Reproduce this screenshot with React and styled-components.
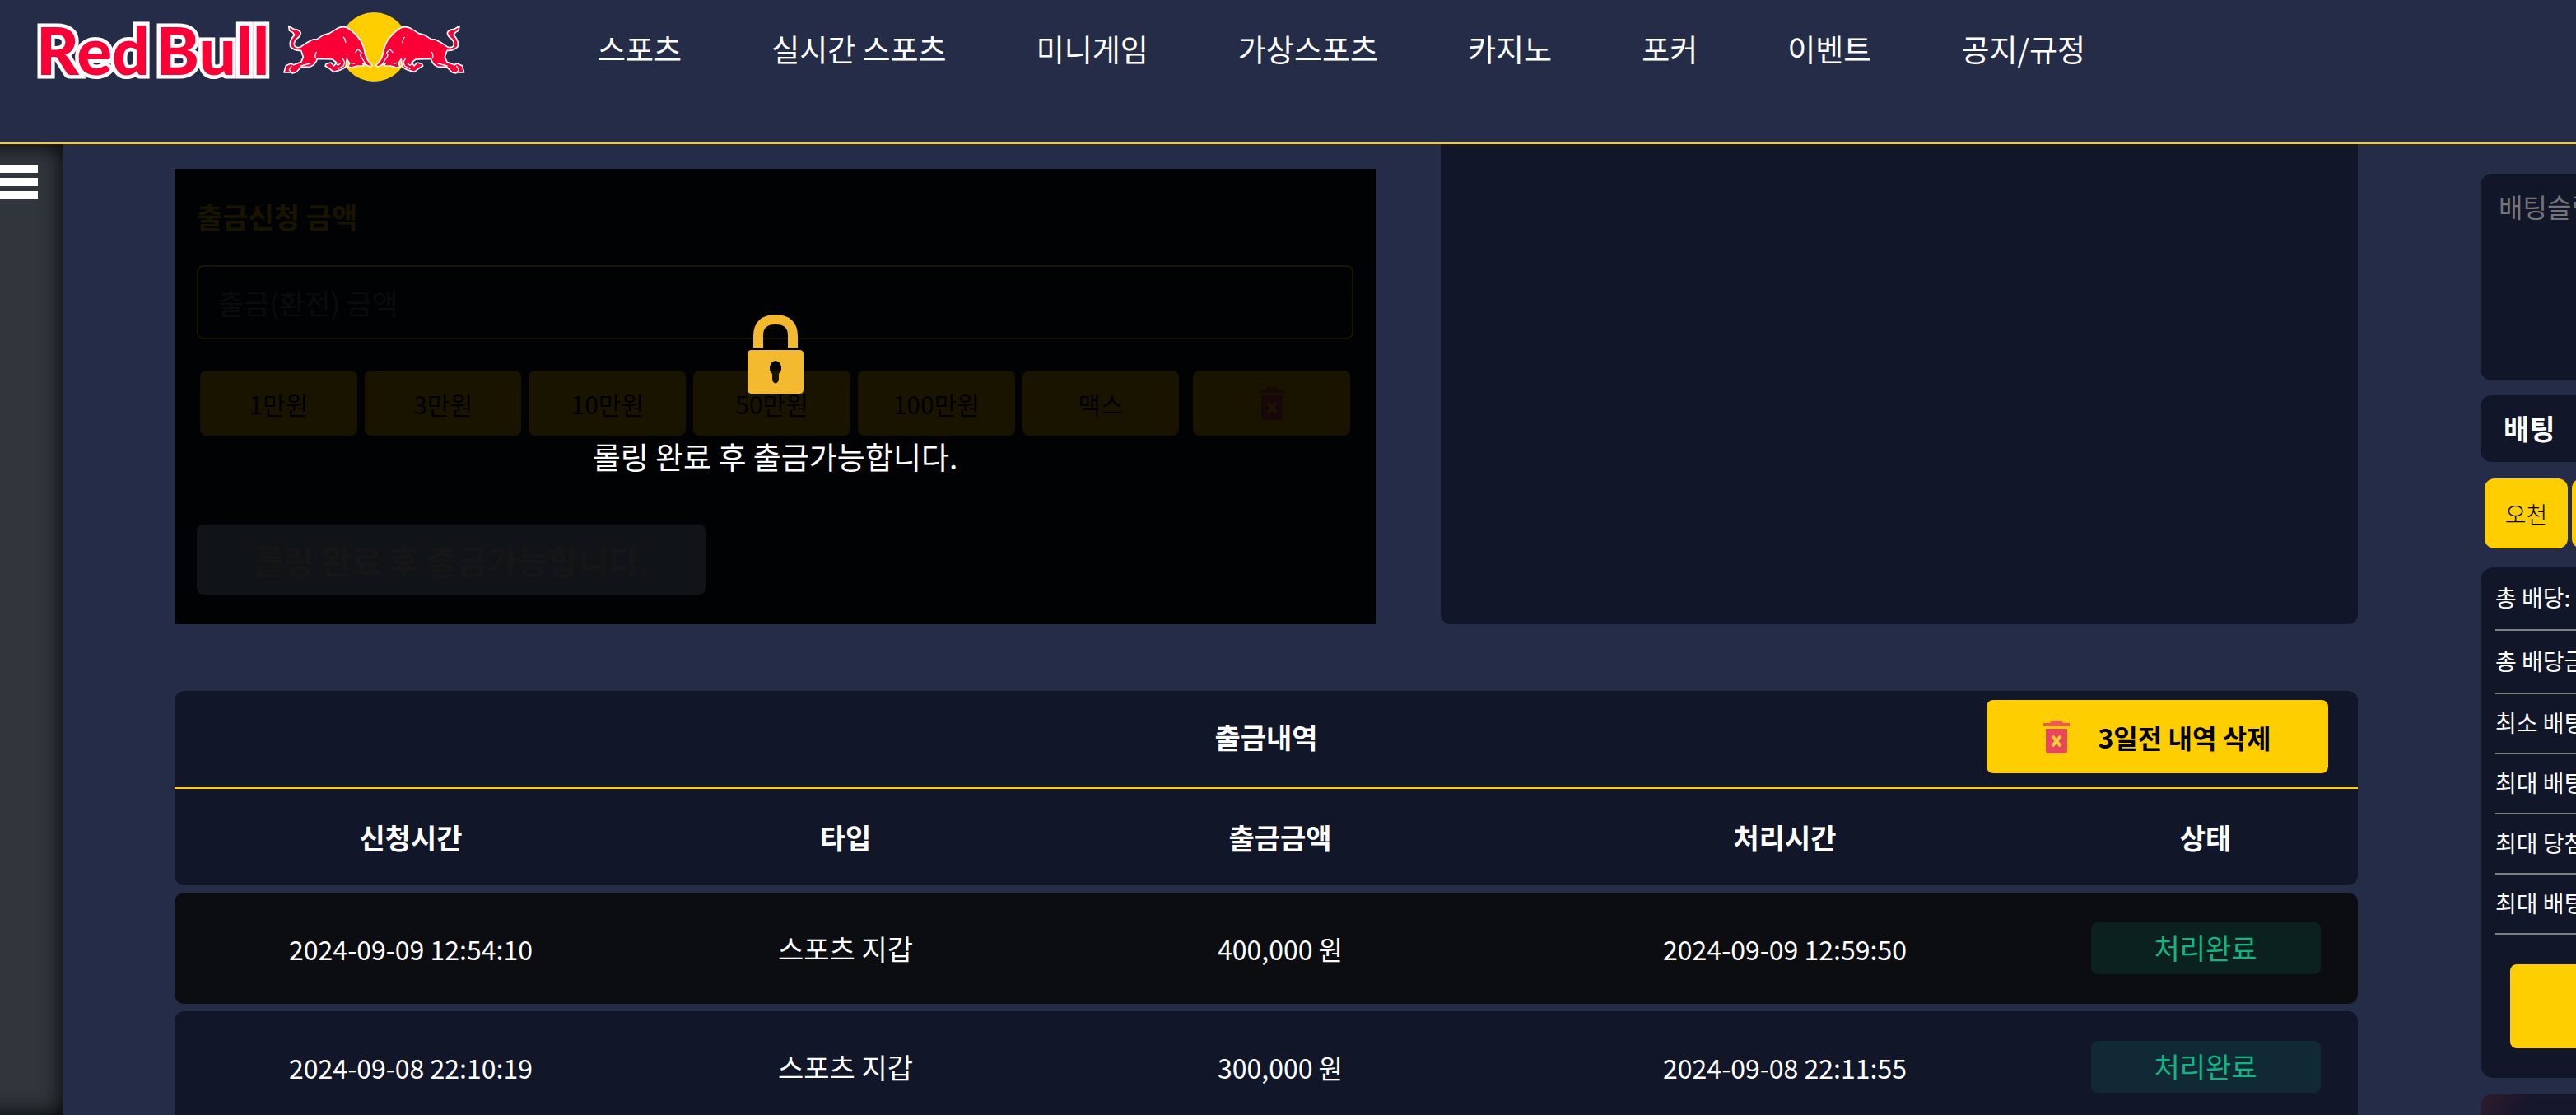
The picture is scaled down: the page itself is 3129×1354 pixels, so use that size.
import React from 'react';
import styled, {createGlobalStyle} from "styled-components";

const GlobalStyle = createGlobalStyle`
    * {
        box-sizing: border-box;
    }

    body {
        margin: 0;
        background: #252c48;
        color: #ffffff;
        font-family: "Noto Sans CJK KR", "Noto Sans", sans-serif;
        font-size: 34px;
        line-height: 50px;
    }

    button, input, textarea {
        font-family: inherit;
    }
`;

const Page = styled.div`
    display: flex;
    flex-direction: column;
    height: 100vh;
    overflow: hidden;
`;

const Header = styled.header`
    display: flex;
    flex: none;
    align-items: flex-start;
    gap: 146px;
    height: 175px;
    padding-left: 44px;
    border-bottom: 2px solid #ffce00;
`;

const Brand = styled.a`
    display: flex;
    align-items: flex-start;
    flex: none;
    width: 536px;
    text-decoration: none;
`;

const Nav = styled.nav`
    display: flex;
    gap: 109px;
    padding-top: 34px;
`;

const NavLink = styled.a`
    color: #ffffff;
    font-size: 37px;
    line-height: 50px;
    text-decoration: none;
    white-space: nowrap;
`;

const Body = styled.div`
    display: flex;
    flex: 1;
    min-height: 0;
`;

/* the rail starts outside the window so only its top and right edges are shaded */
const Rail = styled.aside`
    flex: none;
    width: 117px;
    margin-left: -40px;
    padding: 25px 0 0 40px;
    background: #30363c;
    box-shadow: inset 0 0 28px #000000;
`;

const MenuButton = styled.button`
    display: flex;
    flex-direction: column;
    gap: 6px;
    width: 46px;
    padding: 0;
    border: 0;
    background: none;
`;

const MenuBar = styled.span`
    width: 100%;
    height: 10px;
    background: #ffffff;
`;

const Main = styled.main`
    flex: 1;
    min-width: 0;
    padding: 0 149px 0 135px;
`;

const TopPanels = styled.div`
    display: grid;
    grid-template-columns: 1459fr 1114fr;
    gap: 79px;
`;

const WithdrawPanel = styled.section`
    position: relative;
    margin-top: 30px;
    padding: 33px 27px 36px;
    background: #111629;
`;

const FieldLabel = styled.label`
    display: block;
    color: #ffce00;
    font-weight: 700;
`;

const AmountInput = styled.input`
    display: block;
    width: 100%;
    height: 90px;
    margin-top: 34px;
    padding: 0 24px;
    border: 2px solid #ffce00;
    border-radius: 8px;
    background: transparent;
    color: #ffffff;
    font-size: 34px;

    &::placeholder {
        color: #757575;
        opacity: 1;
    }
`;

const AmountButtons = styled.div`
    display: flex;
    gap: 9px;
    margin-top: 38px;
    padding: 0 4px;
`;

const AmountButton = styled.button`
    display: flex;
    flex: 1;
    align-items: center;
    justify-content: center;
    height: 79px;
    margin-left: ${props => props.$apart ? "8px" : "0"};
    padding: 0;
    border: 0;
    border-radius: 8px;
    background: #ffce00;
    color: #000000;
    font-size: 30px;
`;

const SubmitButton = styled.button`
    width: 44%;
    height: 85px;
    margin-top: 108px;
    border: 0;
    border-radius: 8px;
    background: #a0c8f0;
    color: #dddddd;
    font-size: 40px;
    font-weight: 700;
    white-space: nowrap;
`;

const LockOverlay = styled.div`
    position: absolute;
    inset: 0;
    display: flex;
    flex-direction: column;
    align-items: center;
    justify-content: center;
    gap: 48px;
    background: rgba(0, 0, 0, 0.9);
    font-size: 37px;
    line-height: 56px;
`;

const InfoPanel = styled.section`
    border-radius: 0 0 12px 12px;
    background: #111629;
`;

const History = styled.section`
    margin-top: 81px;
`;

const HistoryBar = styled.div`
    display: grid;
    grid-template-columns: 1fr auto 1fr;
    align-items: center;
    padding: 11px 36px 17px;
    border-bottom: 2px solid #ffce00;
    border-radius: 12px 12px 0 0;
    background: #111629;
`;

const HistoryTitle = styled.h2`
    grid-column: 2;
    margin: 0;
    font-size: 34px;
    font-weight: 700;
`;

const DeleteButton = styled.button`
    display: flex;
    align-items: center;
    justify-content: center;
    justify-self: end;
    gap: 34px;
    width: 415px;
    height: 89px;
    border: 0;
    border-radius: 8px;
    background: #ffce00;
    color: #000000;
    font-size: 32px;
    font-weight: 700;
`;

const HistoryTable = styled.table`
    display: block;

    thead, tbody {
        display: block;
    }
`;

const HistoryRow = styled.tr`
    display: grid;
    grid-template-columns: 574fr 482fr 574fr 652fr 370fr;
    align-items: center;
    height: ${props => props.$head ? "117px" : "135px"};
    margin-bottom: 9px;
    border-radius: ${props => props.$head ? "0 0 12px 12px" : "12px"};
    background: ${props => props.$dark ? "#0b0d11" : "#111629"};
`;

const HeadCell = styled.th`
    padding: 0;
    font-weight: 700;
    text-align: center;
`;

const Cell = styled.td`
    padding: 0;
    font-size: ${props => props.$numeric ? "32px" : "34px"};
    text-align: center;
`;

const Status = styled.span`
    display: block;
    width: 279px;
    margin: 0 auto;
    padding: 6px 0 7px;
    border-radius: 8px;
    background: rgba(20, 180, 130, 0.12);
    color: #14b482;
`;

const SlipColumn = styled.aside`
    flex: none;
    width: 116px;
    overflow: hidden;
`;

const Slip = styled.div`
    width: 440px;
    padding-top: 36px;
`;

const SlipBox = styled.textarea`
    display: block;
    width: 100%;
    height: 251px;
    padding: 14px 22px;
    border: 0;
    border-radius: 14px;
    background: #111629;
    color: #ffffff;
    font-size: 32px;
    line-height: 50px;
    resize: none;

    &::placeholder {
        color: #757575;
        opacity: 1;
    }
`;

const SlipTitle = styled.h3`
    margin: 18px 0 0;
    padding: 15px 28px 16px;
    border-radius: 14px;
    background: #111629;
    font-size: 34px;
    line-height: 50px;
`;

const Chips = styled.div`
    display: flex;
    gap: 5px;
    margin: 20px 5px 0;
`;

const Chip = styled.button`
    width: 101px;
    height: 85px;
    padding: 0;
    border: 0;
    border-radius: 12px;
    background: #ffce00;
    color: #000000;
    font-size: 28px;
    font-weight: 300;
`;

const Summary = styled.section`
    margin-top: 23px;
    padding: 0 18px 36px;
    border-radius: 16px;
    background: #111629;
`;

const SummaryLine = styled.div`
    padding: ${props => props.$tall ? "16px 0 19px" : "14px 0 17px"};
    border-bottom: 2px solid #808080;
    font-size: 28px;
    line-height: 40px;
    white-space: nowrap;
`;

const BetButton = styled.button`
    display: block;
    width: 368px;
    height: 102px;
    margin: 36px 18px 0;
    border: 0;
    border-radius: 8px;
    background: #ffce00;
    color: #000000;
    font-size: 34px;
    font-weight: 700;
`;

const Promo = styled.section`
    height: 200px;
    margin-top: 20px;
    border-radius: 14px;
    background: linear-gradient(120deg, #301c2c 0, #15152b 60px);
`;

function Bull() {
    return (
        <g strokeLinejoin="round" strokeLinecap="round">
            <path
                d="M62 95 L80 106 Q102 107 106 120 Q104 133 90 142 Q78 156 84 168 Q92 177 107 170 Q124 156 150 144 L165 143 L188 128 L210 122 L240 103 Q262 92 282 105 Q308 124 324 148 Q336 168 341 198 Q346 220 367 238 L359 243 L332 231 L336 240 L312 240 L292 246 L277 243 L284 231 L274 215 L270 243 Q255 256 226 262 L208 248 L195 240 L199 232 L216 228 L227 240 L236 228 L221 216 L166 214 Q160 236 141 243 L108 244 L88 264 L75 267 L72 263 L45 264 L52 239 L70 231 L80 236 L107 226 L115 208 L107 184 Q83 186 68 170 Q62 150 83 127 Q77 116 65 112 Z"
                fill="#fa0037" stroke="#ffffff" strokeWidth="5"
            />
            <path
                d="M262 136 Q270 143 269 155 M305 191 L315 179 L327 192 L323 203 M325 206 L345 237 M163 190 Q156 199 160 212 M236 233 L242 238 L250 231 M72 241 L64 254 L70 262 M107 240 L140 231 M290 229 L301 231 M258 212 L266 226 L262 240 L242 250"
                fill="none" stroke="#ffffff" strokeWidth="4"
            />
        </g>
    );
}

function Wordmark({x, children}) {
    return (
        <text
            x={x} y="91" fontFamily="Lato, sans-serif" fontSize="80" fontWeight="900"
            fill="#fa0037" stroke="#ffffff" strokeWidth="9" paintOrder="stroke"
        >
            {children}
        </text>
    );
}

function Logo() {
    return (
        <Brand href="#" aria-label="Red Bull">
            <svg width="536" height="110" viewBox="44 0 536 110">
                <Wordmark x="44">Red</Wordmark>
                <Wordmark x="189">Bull</Wordmark>
                <svg x="330" y="0" width="250" height="110" viewBox="0 0 750 330">
                    <circle cx="373" cy="171" r="126" fill="#ffce00"/>
                    <Bull/>
                    <g transform="translate(746 0) scale(-1 1)">
                        <Bull/>
                    </g>
                </svg>
            </svg>
        </Brand>
    );
}

function TrashIcon() {
    return (
        <svg width="32" height="40" viewBox="0 0 32 40" aria-hidden="true">
            <path d="M10 0 H22 L24 3 H32 V7 H0 V3 H8 Z" fill="#ee5a50"/>
            <path d="M3 10 H29 V36 Q29 40 25 40 H7 Q3 40 3 36 Z" fill="#e8465a"/>
            <path d="M11 19 L21 31 M21 19 L11 31" stroke="#ffce3a" strokeWidth="4"/>
        </svg>
    );
}

function LockIcon() {
    return (
        <svg width="68" height="96" viewBox="0 0 68 96" aria-hidden="true">
            <path d="M13 40 V26 Q13 6 34 6 Q55 6 55 26 V40" fill="none" stroke="#f3b92f" strokeWidth="12"/>
            <path
                d="M5 43 H63 Q68 43 68 48 V91 Q68 96 63 96 H5 Q0 96 0 91 V48 Q0 43 5 43 Z M34 56 A8 9 0 0 0 30 72 V80 Q34 87 38 80 V72 A8 9 0 0 0 34 56 Z"
                fill="#f3b92f" fillRule="evenodd"
            />
        </svg>
    );
}

const menu = ["스포츠", "실시간 스포츠", "미니게임", "가상스포츠", "카지노", "포커", "이벤트", "공지/규정"];

const amounts = ["1만원", "3만원", "10만원", "50만원", "100만원", "맥스"];

const columns = ["신청시간", "타입", "출금금액", "처리시간", "상태"];

const withdrawals = [
    {requested: "2024-09-09 12:54:10", type: "스포츠 지갑", amount: "400,000 원", processed: "2024-09-09 12:59:50"},
    {requested: "2024-09-08 22:10:19", type: "스포츠 지갑", amount: "300,000 원", processed: "2024-09-08 22:11:55"},
];

const limits = ["총 배당:", "총 배당금:", "최소 배팅:", "최대 배팅:", "최대 당첨:", "최대 배팅:"];

export default class App extends React.Component {

    renderForm() {
        return (
            <WithdrawPanel>
                <FieldLabel htmlFor="amount">출금신청 금액</FieldLabel>
                <AmountInput id="amount" placeholder="출금(환전) 금액"/>
                <AmountButtons>
                    {amounts.map(amount => (
                        <AmountButton key={amount} type="button">{amount}</AmountButton>
                    ))}
                    <AmountButton $apart type="button" aria-label="삭제">
                        <TrashIcon/>
                    </AmountButton>
                </AmountButtons>
                <SubmitButton type="button">롤링 완료 후 출금가능합니다.</SubmitButton>
                <LockOverlay>
                    <LockIcon/>
                    <span>롤링 완료 후 출금가능합니다.</span>
                </LockOverlay>
            </WithdrawPanel>
        );
    }

    renderHistory() {
        return (
            <History>
                <HistoryBar>
                    <HistoryTitle>출금내역</HistoryTitle>
                    <DeleteButton type="button">
                        <TrashIcon/>
                        3일전 내역 삭제
                    </DeleteButton>
                </HistoryBar>
                <HistoryTable>
                    <thead>
                        <HistoryRow $head>
                            {columns.map(column => (
                                <HeadCell key={column}>{column}</HeadCell>
                            ))}
                        </HistoryRow>
                    </thead>
                    <tbody>
                        {withdrawals.map((item, index) => (
                            <HistoryRow key={item.requested} $dark={index % 2 === 0}>
                                <Cell $numeric>{item.requested}</Cell>
                                <Cell>{item.type}</Cell>
                                <Cell $numeric>{item.amount}</Cell>
                                <Cell $numeric>{item.processed}</Cell>
                                <Cell><Status>처리완료</Status></Cell>
                            </HistoryRow>
                        ))}
                    </tbody>
                </HistoryTable>
            </History>
        );
    }

    renderSlip() {
        return (
            <SlipColumn>
                <Slip>
                    <SlipBox aria-label="배팅슬립" placeholder="배팅슬립"/>
                    <SlipTitle>배팅</SlipTitle>
                    <Chips>
                        <Chip type="button">오천</Chip>
                        <Chip type="button">만원</Chip>
                    </Chips>
                    <Summary>
                        {limits.map((label, index) => (
                            <SummaryLine key={index} $tall={index < 2}>{label}</SummaryLine>
                        ))}
                        <BetButton type="button">배팅</BetButton>
                    </Summary>
                    <Promo/>
                </Slip>
            </SlipColumn>
        );
    }

    render() {
        return (
            <Page>
                <GlobalStyle/>
                <Header>
                    <Logo/>
                    <Nav>
                        {menu.map(item => (
                            <NavLink key={item} href="#">{item}</NavLink>
                        ))}
                    </Nav>
                </Header>
                <Body>
                    <Rail>
                        <MenuButton type="button" aria-label="메뉴">
                            <MenuBar/>
                            <MenuBar/>
                            <MenuBar/>
                        </MenuButton>
                    </Rail>
                    <Main>
                        <TopPanels>
                            {this.renderForm()}
                            <InfoPanel/>
                        </TopPanels>
                        {this.renderHistory()}
                    </Main>
                    {this.renderSlip()}
                </Body>
            </Page>
        );
    }
}
